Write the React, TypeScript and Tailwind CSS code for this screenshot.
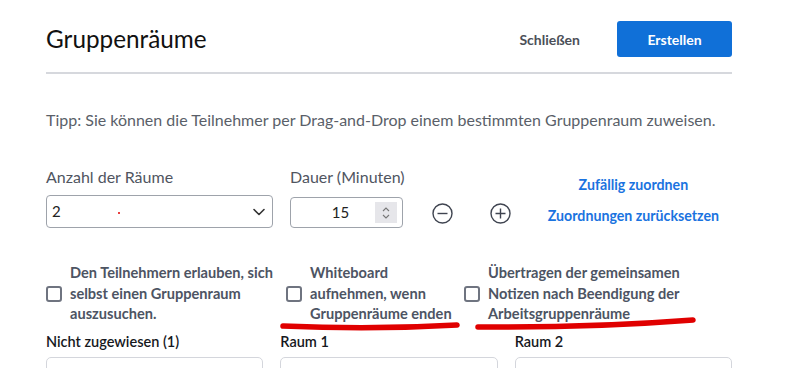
import React from "react";

const F = { fontFamily: "Lato, 'Noto Sans', sans-serif" };

function Checkbox() {
  return <span className="mt-[23px] block h-[16px] w-[16px] shrink-0 rounded-[3px] border-2 border-[#6f7480] bg-white" />;
}

export default function App() {
  return (
    <div className="relative h-[368px] w-[808px] overflow-hidden bg-white" style={F}>
      <div className="ml-[46px] w-[686px]">
        {/* header */}
        <div className="flex h-[36px] items-center justify-between mt-[21px]">
          <h1 className="text-[24.3px] font-normal text-[#111] leading-none">Gruppenräume</h1>
          <div className="flex items-center">
            <button className="mr-[37px] text-[14px] font-bold text-[#4b4f58]">Schließen</button>
            <button className="h-[36px] w-[115px] rounded-[3px] bg-[#1070d8] text-[14px] font-bold text-white">Erstellen</button>
          </div>
        </div>
        <div className="mt-[15px] h-[2px] bg-[#d6d8dd]" />
        <p className="mt-[34px] text-[16px] leading-[24px] text-[#5a5f69]">
          Tipp: Sie können die Teilnehmer per Drag-and-Drop einem bestimmten Gruppenraum zuweisen.
        </p>

        {/* form row */}
        <div className="mt-[33px] flex">
          <div className="w-[227px]">
            <div className="text-[16px] leading-[24px] text-[#50555f]">Anzahl der Räume</div>
            <div className="relative mt-[6px] flex h-[33px] items-center rounded-[4px] border border-[#9ea3ab] bg-white pl-[5px] pr-[6px]">
              <span className="text-[15px] text-[#222]">2</span>
              <span className="absolute left-[71px] top-[16px] h-[2px] w-[2px] rounded-full bg-[#e00000]" />
              <svg className="ml-auto" width="14" height="14" viewBox="0 0 14 14">
                <path d="M2 4.5 L7 9.5 L12 4.5" fill="none" stroke="#333" strokeWidth="1.6" strokeLinecap="round" strokeLinejoin="round" />
              </svg>
            </div>
          </div>
          <div className="ml-[17px] w-[113px]">
            <div className="text-[16px] leading-[24px] text-[#50555f] whitespace-nowrap">Dauer (Minuten)</div>
            <div className="mt-[8px] flex h-[31px] items-center rounded-[4px] border border-[#9ea3ab] bg-white pr-[5px]">
              <span className="flex-1 pl-[15px] text-center text-[15px] text-[#222]">15</span>
              <span className="flex h-[21px] w-[22px] flex-col items-center justify-center bg-[#e6e6ea]">
                <svg width="10" height="16" viewBox="0 0 10 16">
                  <path d="M2 6 L5 3 L8 6" fill="none" stroke="#777" strokeWidth="1.1" />
                  <path d="M2 10 L5 13 L8 10" fill="none" stroke="#777" strokeWidth="1.1" />
                </svg>
              </span>
            </div>
          </div>
          <div className="ml-[29px] mt-[38px] flex items-start gap-[37px]">
            <svg width="21" height="21" viewBox="0 0 21 21">
              <circle cx="10.5" cy="10.5" r="9.5" fill="none" stroke="#3f4450" strokeWidth="1.4" />
              <path d="M5.5 10.5 H15.5" stroke="#3f4450" strokeWidth="1.4" />
            </svg>
            <svg width="21" height="21" viewBox="0 0 21 21">
              <circle cx="10.5" cy="10.5" r="9.5" fill="none" stroke="#3f4450" strokeWidth="1.4" />
              <path d="M5.5 10.5 H15.5 M10.5 5.5 V15.5" stroke="#3f4450" strokeWidth="1.4" />
            </svg>
          </div>
          <div className="ml-auto mr-[13px] mt-[8px] flex flex-col items-center text-[14.2px] font-bold text-[#1a73e0]">
            <span className="leading-[24px]">Zufällig zuordnen</span>
            <span className="mt-[7px] leading-[24px]">Zuordnungen zurücksetzen</span>
          </div>
        </div>

        {/* checkboxes */}
        <div className="mt-[35px] flex text-[14.6px] font-bold leading-[20.5px] text-[#4d5463]">
          <div className="flex w-[240px] gap-[8px]">
            <Checkbox />
            <span>Den Teilnehmern erlauben, sich<br />selbst einen Gruppenraum<br />auszusuchen.</span>
          </div>
          <div className="flex w-[178px] gap-[8px]">
            <Checkbox />
            <span>Whiteboard<br />aufnehmen, wenn<br />Gruppenräume enden</span>
          </div>
          <div className="flex gap-[8px]">
            <Checkbox />
            <span>Übertragen der gemeinsamen<br />Notizen nach Beendigung der<br />Arbeitsgruppenräume</span>
          </div>
        </div>

        {/* rooms */}
        <div className="mt-[6px] grid grid-cols-3 gap-x-[17px]">
          {["Nicht zugewiesen (1)", "Raum 1", "Raum 2"].map((t) => (
            <div key={t}>
              <div className="text-[14.5px] font-semibold leading-[22px] text-[#16181d]">{t}</div>
              <div className="mt-[4px] h-[40px] rounded-[5px] border border-[#d4d6dc] bg-white" />
            </div>
          ))}
        </div>
      </div>

      {/* hand-drawn red annotations */}
      <svg className="pointer-events-none absolute left-0 top-0" width="808" height="368">
        <path d="M283 326 Q 372 330 457 325" fill="none" stroke="#e00000" strokeWidth="5.5" strokeLinecap="round" />
        <path d="M478 327 Q 590 328 693 320" fill="none" stroke="#e00000" strokeWidth="5.5" strokeLinecap="round" />
      </svg>
    </div>
  );
}
